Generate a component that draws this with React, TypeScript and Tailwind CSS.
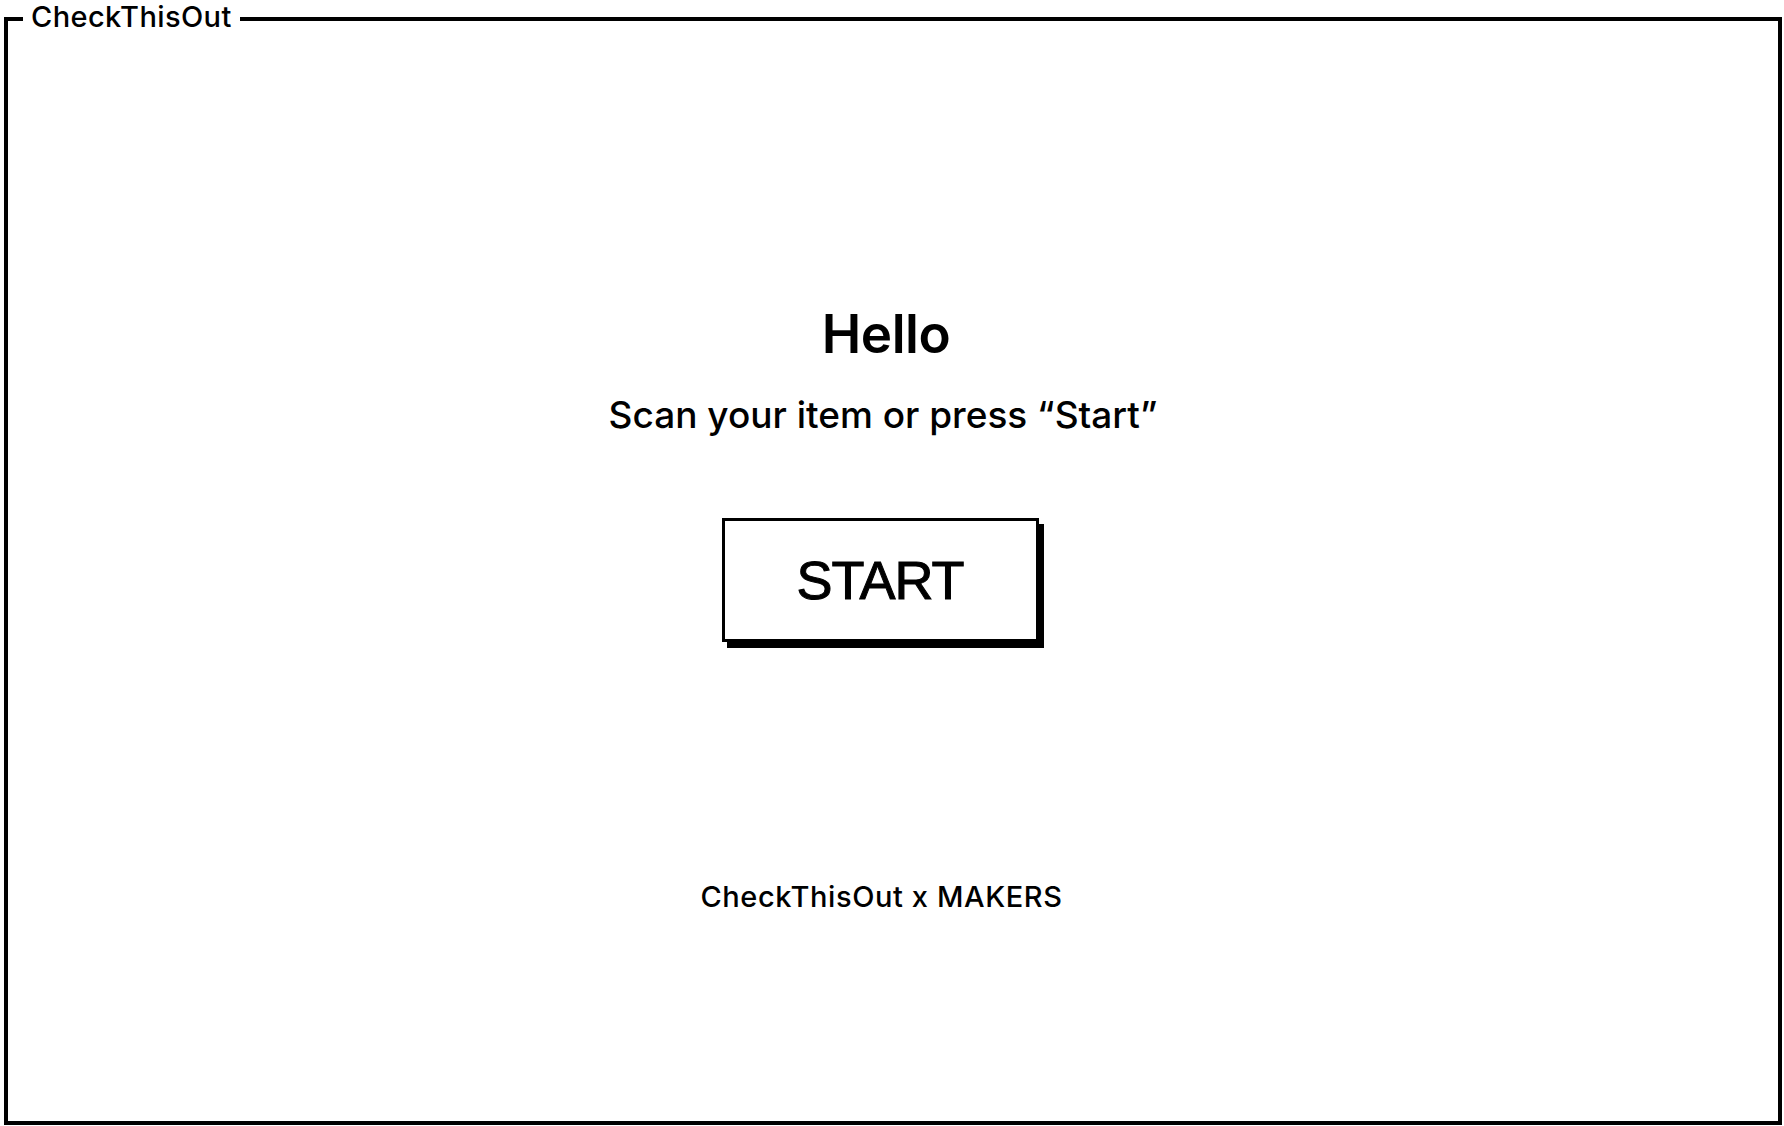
import React from 'react'

const rounded = { fontFamily: 'Inter, "Open Sans", "Noto Sans", sans-serif' }
const plain = { fontFamily: '"Liberation Sans", Arial, sans-serif' }

function StartButton() {
  return (
    <button
      type="button"
      className="flex h-[124px] w-[317px] items-center justify-center border-[3.5px] border-black bg-white text-black shadow-[5px_6px_0_#000]"
    >
      <span style={plain} className="text-[54px] leading-none tracking-[-1px] [-webkit-text-stroke:1px_#000]">
        START
      </span>
    </button>
  )
}

export default function App() {
  return (
    <div className="h-[1126px] w-full bg-white pb-[1px] pl-[4px] pr-[2px] text-black" style={rounded}>
      <fieldset className="m-0 flex h-full min-w-0 flex-col items-center border-[4px] border-black p-0">
        {/* window title sits in the top border */}
        <legend className="ml-[15px] px-[8px] pb-[4px] text-[29px] font-medium leading-[34px] tracking-[0.4px]">CheckThisOut</legend>

        <div className="flex w-full flex-col items-center pr-[14px]">
          <h1 className="mt-[270px] text-[53px] font-semibold leading-none tracking-[-0.5px]">Hello</h1>
          <p className="mr-[6px] mt-[35px] text-[37px] font-medium leading-none">Scan your item or press “Start”</p>

          <div className="mr-[12px] mt-[85px]">
            <StartButton />
          </div>

          <p className="mr-[9px] mt-[240px] text-[29px] font-medium leading-none tracking-[0.6px]">CheckThisOut x MAKERS</p>
        </div>
      </fieldset>
    </div>
  )
}
